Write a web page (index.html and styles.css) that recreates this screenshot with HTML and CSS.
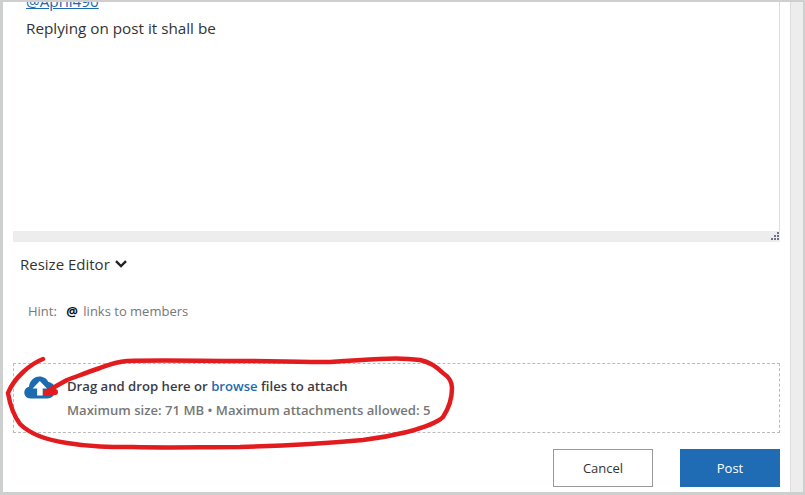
FILE: index.html
```html
<!DOCTYPE html>
<html lang="en">
<head>
    <meta charset="UTF-8">
    <title>Reply</title>
    <link rel="stylesheet" href="styles.css">
</head>
<body>
    <div class="window">
        <main class="form">
            <div class="editor">
                <div class="editor-text">
                    <a class="mention" href="#">@April490</a>
                    <p>Replying on post it shall be</p>
                </div>
                <div class="editor-status">
                    <svg class="grip" width="10" height="10" viewBox="0 0 10 10">
                        <path d="M8 0h2v2H8zM5 3h2v2H5zM8 3h2v2H8zM2 6h2v2H2zM5 6h2v2H5zM8 6h2v2H8z" fill="#6b6f8a"/>
                    </svg>
                </div>
            </div>

            <button class="resize" type="button">
                Resize Editor
                <svg width="12" height="8" viewBox="0 0 12 8">
                    <path d="M1 1.200 6 6l5-4.800" fill="none" stroke="#222" stroke-width="2.400"/>
                </svg>
            </button>

            <p class="hint">Hint: <b>@</b> links to members</p>

            <div class="dropzone">
                <svg class="cloud" width="32" height="23" viewBox="0 0 32 23">
                    <path d="M6.500 22.500C2.800 22.500.3 20 .3 16.600c0-2.900 1.900-5.200 4.700-5.800C5.400 5 10 .4 15.500.4c4 0 7.400 2.200 9 5.600 3.900.6 6.900 3.700 6.900 8 0 4.900-3.300 8.500-8 8.500z" fill="#1c6ab0"/>
                    <path d="M15.800 5 23 12.400h-4.300v7h-5.600v-7H8.600z" fill="#fff"/>
                </svg>
                <div class="drop-text">
                    <p class="drop-main">Drag and drop here or <a href="#">browse</a> files to attach</p>
                    <p class="drop-limits">Maximum size: 71 MB • Maximum attachments allowed: 5</p>
                </div>
            </div>

            <div class="actions">
                <button class="btn btn-cancel" type="button">Cancel</button>
                <button class="btn btn-post" type="button">Post</button>
            </div>
        </main>
        <div class="scrollbar"></div>
    </div>

    <!-- red marker drawn over the screenshot -->
    <svg class="marker" width="805" height="495" viewBox="0 0 805 495">
        <path d="M43 359C30 364 14 378 8 393C10 405 14 416 20 424C30 434 46 440 67 443C90 447 110 447 133 447C170 448 200 447 240 447C280 446 320 444 363 440C380 438 395 435 407 432C425 427 437 423 443 417C449 408 452 398 452 388C452 382 449 377 443 373C436 366 430 362 420 360C405 358 395 358 380 359C360 360 345 361 330 362C300 362 270 361 240 361C200 361 160 360 127 361C115 362 108 365 100 368C88 372 78 376 67 380C60 384 52 388 47 392" fill="none" stroke="#e21b1f" stroke-width="4.500" stroke-linecap="round" stroke-linejoin="round"/>
        <path d="M46 393 55 392" fill="none" stroke="#e21b1f" stroke-width="6" stroke-linecap="round"/>
    </svg>
</body>
</html>
```

FILE: styles.css
```css
* {
    box-sizing: border-box;
}

html, body {
    margin: 0;
    height: 495px;
    overflow: hidden;
}

body {
    font-family: 'Open Sans', 'Noto Sans', sans-serif;
    background: #fff;
    color: #333;
}

p {
    margin: 0;
}

.window {
    display: flex;
    height: 495px;
    border-top: 2px solid #cdd0cf;
    border-left: 3px solid #cdd0cf;
    border-right: 2px solid #cdd0cf;
    border-bottom: 3px solid #cdd0cf;
}

.form {
    flex: 1;
    padding: 0 10px 0 10px;
    min-width: 0;
}

.scrollbar {
    width: 13px;
    background: #eeeded;
    border-left: 1px solid #dcdcdc;
}

.editor {
    height: 240px;
    display: flex;
    flex-direction: column;
}

.editor-text {
    flex: 1;
    overflow: hidden;
    padding: 0 0 0 13px;
    border-right: 1px solid #dcdcdc;
    font-size: 15.25px;
    line-height: 20px;
}

.mention {
    display: block;
    margin-top: -11px;
    color: #1c6ab0;
}

.editor-text p {
    margin-top: 7px;
}

.editor-status {
    height: 11px;
    background: #eeeded;
    display: flex;
    justify-content: flex-end;
    align-items: flex-end;
    padding: 0 1px 0 0;
}

.grip {
    display: block;
}

.resize {
    display: flex;
    align-items: center;
    gap: 5px;
    margin: 12px 0 0 7px;
    padding: 0;
    border: none;
    background: none;
    font: inherit;
    font-size: 15px;
    line-height: 20px;
    color: #333;
}

.hint {
    margin: 28px 0 0 15px;
    font-size: 13px;
    line-height: 18px;
    color: #777;
}

.hint b {
    margin: 0 2px 0 6px;
    color: #111;
}

.dropzone {
    display: flex;
    align-items: flex-start;
    gap: 11px;
    height: 70px;
    margin-top: 43px;
    padding: 12px 0 0 10px;
    border: 1px dashed #bbb;
}

.drop-main {
    font-size: 13.13px;
    line-height: 20px;
    font-weight: 600;
    color: #3b3b45;
}

.drop-main a {
    color: #1c6ab0;
    text-decoration: none;
}

.drop-limits {
    margin-top: 4px;
    font-size: 13.1px;
    line-height: 20px;
    font-weight: 600;
    color: #777;
}

.actions {
    display: flex;
    justify-content: flex-end;
    gap: 27px;
    margin-top: 16px;
}

.btn {
    width: 100px;
    height: 38px;
    font: inherit;
    font-size: 13px;
}

.btn-cancel {
    background: #fff;
    border: 1px solid #999;
    color: #333;
}

.btn-post {
    background: #1f6cb5;
    border: none;
    color: #fff;
}

.marker {
    position: absolute;
    top: 0;
    left: 0;
    pointer-events: none;
}
```
